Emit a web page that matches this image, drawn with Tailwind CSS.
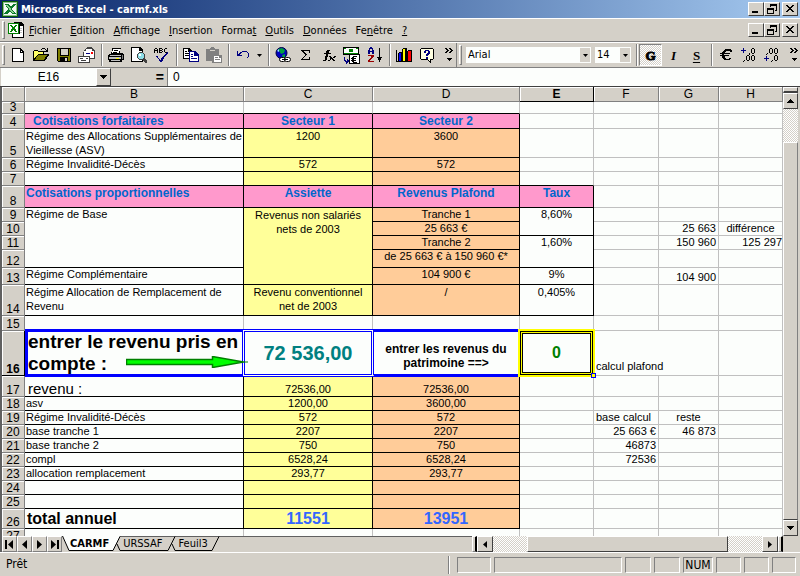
<!DOCTYPE html>
<html lang="fr">
<head>
<meta charset="utf-8">
<title>Microsoft Excel - carmf.xls</title>
<script src="https://cdn.jsdelivr.net/npm/@tailwindcss/browser@4"></script>
</head>
<body class="flex h-screen flex-col overflow-hidden bg-[#d4d0c8] font-['DejaVu_Sans_Condensed','Liberation_Sans',sans-serif] text-[11px] leading-[13px] text-black">

<!-- Shared symbols -->
<svg class="hidden" aria-hidden="true">
  <symbol id="min" viewBox="0 0 12 10"><path d="M2 7h6v2H2z"/></symbol>
  <symbol id="restore" viewBox="0 0 12 10"><path d="M4 0h7v7H9V6h1V2H5v1H4zM1 4h7v6H1zM2 6v3h5V6z" fill-rule="evenodd"/></symbol>
  <symbol id="close" viewBox="0 0 12 10"><path d="M2 1h2v1h1v1h2V2h1V1h2v1H9v1H8v1H7v1h1v1h1v1h1v1H8V7H7V6H5v1H4v1H2V7h1V6h1V5h1V4H4V3H3V2H2z"/></symbol>
  <symbol id="down" viewBox="0 0 7 4"><path d="M0 0h7v1H6v1H5v1H4v1H3V3H2V2H1V1H0z"/></symbol>
  <symbol id="more" viewBox="0 0 9 14"><path d="M0 0h2v1h1v1h1v1H3v1H2v1H0V4h1V3h1V2H1V1H0zM4 0h2v1h1v1h1v1H7v1H6v1H4V4h1V3h1V2H5V1H4zM2 10h5v1H6v1H5v1H4v-1H3v-1H2z"/></symbol>
  <symbol id="xl" viewBox="0 0 16 16">
    <path fill="#086008" d="M0 0h16v16H0z"/><path fill="#8fbf8f" d="M1 1h14v14H1z"/><path fill="#f4faf4" d="M2 2h12v12H2z"/>
    <path fill="#0a7a2a" d="M3 3h4l2 3 2-3h3l-4 5 4 5h-4L8 10l-2 3H2l4-5z"/><path fill="#8fd08f" d="M4 4h2l6 8h-2z"/>
  </symbol>
</svg>

<!-- Title bar -->
<header class="flex h-[18px] shrink-0 items-center bg-linear-to-r from-[#0a246a] to-[#a6caf0] pr-[2px] pl-[2px]">
  <svg class="size-4 shrink-0" shape-rendering="crispEdges" aria-hidden="true"><use href="#xl"/></svg>
  <h1 class="flex-1 pl-[3px] text-[11px] font-bold text-white">Microsoft Excel - carmf.xls</h1>
  <button aria-label="Réduire" class="grid h-[14px] w-4 place-items-center border border-t-white border-r-[#404040] border-b-[#404040] border-l-white bg-[#d4d0c8]"><svg class="h-[10px] w-3" shape-rendering="crispEdges"><use href="#min"/></svg></button>
  <button aria-label="Restaurer" class="grid h-[14px] w-4 place-items-center border border-t-white border-r-[#404040] border-b-[#404040] border-l-white bg-[#d4d0c8]"><svg class="h-[10px] w-3" shape-rendering="crispEdges"><use href="#restore"/></svg></button>
  <button aria-label="Fermer" class="ml-[2px] grid h-[14px] w-4 place-items-center border border-t-white border-r-[#404040] border-b-[#404040] border-l-white bg-[#d4d0c8]"><svg class="h-[10px] w-3" shape-rendering="crispEdges"><use href="#close"/></svg></button>
</header>

<!-- Menu bar -->
<nav class="flex h-6 shrink-0 items-center border-t border-b border-t-white border-b-[#808080] pr-[2px] pl-[2px]">
  <span class="h-[18px] w-[3px] shrink-0 border border-t-white border-r-[#808080] border-b-[#808080] border-l-white"></span>
  <svg class="ml-[3px] h-4 w-[17px] shrink-0" viewBox="0 0 17 16" shape-rendering="crispEdges" aria-hidden="true">
    <path fill="#000" d="M6 0h7l3 3v13H4V12h1z"/><path fill="#fff" d="M7 1h5v3h3v11H5v-3h7V1z"/><path fill="#c0c0c0" d="M12 6h2v1h-2zM12 8h2v1h-2zM12 10h2v1h-2z"/>
    <path fill="#008000" d="M0 1h11v11H0z"/><path fill="#fff" d="M1 2h9v9H1z"/><path fill="#008000" d="M2 3h2l1 2 2-2h2L7 6l2 4H7L5 8l-1 2H2l2-4z"/>
  </svg>
  <div class="flex flex-1 gap-[9px] pl-1">
    <button><u>F</u>ichier</button><button><u>E</u>dition</button><button><u>A</u>ffichage</button><button><u>I</u>nsertion</button><button>Forma<u>t</u></button><button><u>O</u>utils</button><button><u>D</u>onnées</button><button>Fe<u>n</u>être</button><button><u>?</u></button>
  </div>
  <button aria-label="Réduire le classeur" class="grid h-[14px] w-4 place-items-center border border-t-white border-r-[#404040] border-b-[#404040] border-l-white"><svg class="h-[10px] w-3" shape-rendering="crispEdges"><use href="#min"/></svg></button>
  <button aria-label="Restaurer le classeur" class="grid h-[14px] w-4 place-items-center border border-t-white border-r-[#404040] border-b-[#404040] border-l-white"><svg class="h-[10px] w-3" shape-rendering="crispEdges"><use href="#restore"/></svg></button>
  <button aria-label="Fermer le classeur" class="ml-[2px] grid h-[14px] w-4 place-items-center border border-t-white border-r-[#404040] border-b-[#404040] border-l-white"><svg class="h-[10px] w-3" shape-rendering="crispEdges"><use href="#close"/></svg></button>
</nav>

<!-- Toolbars -->
<div class="flex h-[26px] shrink-0 items-center border-t border-b border-t-white border-b-[#808080]">
  <div class="flex w-[457px] shrink-0 items-center self-stretch border-r border-[#808080] *:shrink-0 [&_button]:grid [&_button]:h-[22px] [&_button]:w-[23px] [&_button]:place-items-center">
    <span class="mr-[1px] ml-[2px] h-5 w-[3px] border border-t-white border-r-[#808080] border-b-[#808080] border-l-white"></span>
    <button aria-label="Nouveau"><svg class="size-4" viewBox="0 0 16 16" shape-rendering="crispEdges"><path d="M2 1h9l3 4v10H2z"/><path fill="#fff" d="M3 2h7v4h3v8H3zM11 3l1 2h-1z"/></svg></button>
    <button aria-label="Ouvrir"><svg class="size-4" viewBox="0 0 16 16" shape-rendering="crispEdges"><path d="M0 4h1V3h4v1h6v3h5v1l-4 6H0z"/><path fill="#ff6" d="M1 4h4v1h5v2H5L1 12z"/><path fill="#808000" d="M5 8h9l-3 5H2z"/><path d="M9 1h3v1H9zM8 2h1v1H8zM12 2h1v1h-1zM14 1h1v4h-4V4h2V3h1z"/></svg></button>
    <button aria-label="Enregistrer"><svg class="size-4" viewBox="0 0 16 16" shape-rendering="crispEdges"><path d="M1 1h14v14H2l-1-1z"/><path fill="#808000" d="M2 2h2v7h9V2h1v12H2z"/><path fill="#d4d0c8" d="M5 2h7v6H5zM10 11h2v3h-2z"/><path d="M4 10h8v4H4z"/><path fill="#d4d0c8" d="M9 11h2v3H9z"/></svg></button>
    <button aria-label="Message"><svg class="h-4 w-[17px]" viewBox="0 0 17 16" shape-rendering="crispEdges"><path fill="#404040" d="M5 5h1V3h1V2h1V1h1V0h5v1h1v1h1v1h1v9h-5v-2H5z"/><path fill="#fff" d="M6 4h10v7h-4V9H6zM8 2h6v2H8z"/><path fill="#f00" d="M13 5h2v2h-2z"/><path fill="#000080" d="M8 6h4v1H8z"/><path fill="#404040" d="M0 9h12v7H0z"/><path fill="#fff" d="M1 10h10v5H1z"/><path d="M2 11h3v1H2zM3 13h5v1H3zM8 11h2v1H8z" fill="#404040"/></svg></button>
    <span class="mr-[2px] ml-[3px] h-[22px] w-px bg-[#808080] shadow-[1px_0_0_#fff]"></span>
    <button aria-label="Imprimer"><svg class="size-4" viewBox="0 0 16 16" shape-rendering="crispEdges"><path d="M4 1h9v1h-1v4h3v1h1v6h-2v2H1v-2H0V8h1V7h2V5h1z"/><path fill="#fff" d="M5 2h7l-1 4H4z"/><path d="M6 3h4v1H6zM5 5h4v1H5z"/><path fill="#c0c0c0" d="M2 8h11v1H2zM1 10h12v2H1zM3 13h9v1H3z"/><path fill="#ff0" d="M8 11h3v1H8z"/><path fill="#808080" d="M14 8h1v4h-1z"/></svg></button>
    <button aria-label="Aperçu"><svg class="size-4" viewBox="0 0 16 16" shape-rendering="crispEdges"><path d="M0 0h9l3 3v12H0z"/><path fill="#fff" d="M1 1h7v3h3v10H1z"/><path fill="#404040" d="M8 5h4v1h1v1h1v4h-1v1h-1v1H8v-1H7v-1H6V7h1V6h1z"/><path fill="#8fdfe8" d="M8 6h4v1h1v4h-1v1H8v-1H7V7h1z"/><path fill="#fff" d="M8 7h2v2H8z"/><path fill="#404040" d="M12 11h2v1h1v1h1v3h-2v-1h-1v-1h-1z"/></svg></button>
    <button aria-label="Orthographe"><svg class="size-4" viewBox="0 0 16 16" shape-rendering="crispEdges"><path d="M1 1h2v1H1zM0 2h1v4H0zM3 2h1v4H3zM1 3h2v1H1zM5 1h3v1H5zM5 2h1v4H5zM8 2h1v1H8zM6 3h2v1H6zM8 4h1v1H8zM6 5h2v1H6zM11 1h2v1h-2zM10 2h1v3h-1zM11 5h2v1h-2z"/><path fill="#000080" d="M2 9h2v2h1v1h1v1h1v-2h1v-1h1V9h1V8h1V7h1V6h1V5h1v2h-1v1h-1v1h-1v1h-1v2H9v2H8v1H6v-1H5v-2H4v-1H3v-1H2z"/></svg></button>
    <span class="mr-[2px] ml-[3px] h-[22px] w-px bg-[#808080] shadow-[1px_0_0_#fff]"></span>
    <button aria-label="Copier"><svg class="size-4" viewBox="0 0 16 16" shape-rendering="crispEdges"><path d="M0 1h6l3 3v8H0z"/><path fill="#fff" d="M1 2h4v3h3v6H1z"/><path d="M2 4h2v1H2zM2 6h4v1H2zM2 8h4v1H2z"/><path fill="#000080" d="M6 4h6l4 4v7H6z"/><path fill="#fff" d="M7 5h4v4h4v5H7z"/><path fill="#000080" d="M8 7h2v1H8zM8 9h2v1H8zM8 11h6v1H8zM12 6l2 2h-2z"/></svg></button>
    <button aria-label="Coller"><svg class="size-4" viewBox="0 0 16 16" shape-rendering="crispEdges"><path fill="#808080" d="M0 2h4V1h1V0h3v1h1v1h4v6h3v8H6v-2H0z"/><path fill="#d4d0c8" d="M4 3h5v1H4z"/><path fill="#fff" d="M8 9h5v2h2v4H8z"/><path fill="#808080" d="M9 10h3v1H9zM9 12h5v1H9z"/></svg></button>
    <span class="mr-[2px] ml-[3px] h-[22px] w-px bg-[#808080] shadow-[1px_0_0_#fff]"></span>
    <button aria-label="Annuler"><svg class="size-4" viewBox="0 0 16 16" shape-rendering="crispEdges"><path fill="#000080" d="M2 4h1v3h1V6h1V5h2V4h5v1h1v1h1v4h-1v1h-1v-1h1V6h-1V5H7v1H6v1H5v1h2v1H2z"/></svg></button>
    <span class="grid w-[11px] place-items-center"><svg class="h-[3px] w-[5px]" viewBox="0 0 7 4"><path d="M0 0h7L3.500 4z"/></svg></span>
    <span class="mr-[2px] ml-[3px] h-[22px] w-px bg-[#808080] shadow-[1px_0_0_#fff]"></span>
    <button aria-label="Lien hypertexte"><svg class="size-4" viewBox="0 0 16 16"><circle cx="6.500" cy="6" r="5.500" fill="#0000c0" stroke="#000040"/><path fill="#00a040" d="M3 2l4-1 3 2-1 3-3 1zM7 8l3-1v3l-2 1z"/><path fill="#9df" d="M2 4l2-2v3z"/><rect x="4.500" y="10.500" width="6" height="4" rx="2" fill="#fff" stroke="#000"/><rect x="9.500" y="10.500" width="6" height="4" rx="2" fill="#fff" stroke="#000"/><path d="M7 12h6v1H7z"/></svg></button>
    <button aria-label="Somme"><svg class="size-4" viewBox="0 0 16 16" shape-rendering="crispEdges"><path d="M3 3h9v3h-1V4H6v1h1v1h1v1h1v1H8v1H7v1H6v1H5v1h6v-2h1v3H3v-1h1v-1h1v-1h1V9h1V7H6V6H5V5H4V4H3z"/></svg></button>
    <button aria-label="Fonction"><svg class="size-4" viewBox="0 0 16 16" shape-rendering="crispEdges"><path d="M6 3h3v1h-1v2h2v1H7v3H6v3H5v1H2v-1h2V9h1V7H3V6h2V4h1zM8 9h2v1h1v1h1v-1h1V9h2v1h-1v1h-2v1h1v1h1v1h-2v-1h-1v-1h-1v1H9v1H7v-1h2v-2H9v-1H8z"/></svg></button>
    <button aria-label="Conversion euro"><svg class="h-[17px] w-[17px]" viewBox="0 0 17 17" shape-rendering="crispEdges"><path d="M0 0h16v8H0z"/><path fill="#008000" d="M1 1h14v6H1z"/><path fill="#fff" d="M3 1h10v1h2v4H1V2h2z"/><path fill="#008000" d="M6 2h4v3H6z"/><path d="M6 7h11v10H6z"/><path fill="#fff" d="M7 8h9v8H7z"/><path d="M10 9h4v1h-3v1h2v1h-2v1h2v1h-2v1h3v1h-4v-1H9v-1H8v-1h1v-1H8v-1h1v-1h1z"/><path fill="#000080" d="M1 10h1v3h1v1h1v-2h1v1h1v2H5v1H4v1H3v-2H2v-1H1z"/></svg></button>
    <button aria-label="Tri croissant"><svg class="size-4" viewBox="0 0 16 16" shape-rendering="crispEdges"><path fill="#000080" d="M3 0h2v1h1v2h1v4H5V5H3v2H1V3h1V1h1zM3 2v2h2V2z" fill-rule="evenodd"/><path fill="#900" d="M1 8h6v2H6v1H5v1H4v1H3v1h4v1H1v-2h1v-1h1v-1h1V9H1z"/><path d="M12 1h1v9h2v1h-1v2h-1v2h-1v-2h-1v-2h-1v-1h2z"/></svg></button>
    <span class="mr-[2px] ml-[3px] h-[22px] w-px bg-[#808080] shadow-[1px_0_0_#fff]"></span>
    <button aria-label="Graphique"><svg class="size-4" viewBox="0 0 16 16" shape-rendering="crispEdges"><path d="M0 3h1v11h15v1H0zM2 6l1-1h3v9H2zM6 2l1-1h4v13H6zM11 4l1-1h4v11h-5z"/><path fill="#00f" d="M3 6h2v8H3z"/><path fill="#ff0" d="M7 2h2v12H7z"/><path fill="#f00" d="M12 4h3v10h-3z"/></svg></button>
    <button aria-label="Aide"><svg class="size-4" viewBox="0 0 16 16" shape-rendering="crispEdges"><path d="M2 1h12v1h1v10h-1v1h-2v3l-4-3H2v-1H1V2h1z"/><path fill="#ffffe0" d="M2 2h12v10h-3v2l-3-2H2z"/><path fill="#000080" d="M6 3h4v1h1v3h-1v1H9v1H7V7h1V6h1V4H7v2H5V4h1zM7 10h2v2H7z"/></svg></button>
    <button aria-label="Autres boutons"><svg class="h-[14px] w-[9px]" shape-rendering="crispEdges"><use href="#more"/></svg></button>
  </div>
  <div class="flex flex-1 items-center *:shrink-0 [&_button]:grid [&_button]:h-[22px] [&_button]:w-[23px] [&_button]:place-items-center">
    <span class="mr-1 ml-[2px] h-5 w-[3px] border border-t-white border-r-[#808080] border-b-[#808080] border-l-white"></span>
    <label class="relative h-4 w-[125px]"><span class="sr-only">Police</span>
      <select class="block h-4 w-full appearance-none bg-[#fcfefc] py-0 pl-[2px] leading-4"><option>Arial</option></select>
      <span class="pointer-events-none absolute top-px right-px grid h-[14px] w-[10px] place-items-center bg-[#d4d0c8]"><svg class="h-[3px] w-[5px]" viewBox="0 0 7 4"><path d="M0 0h7L3.500 4z"/></svg></span>
    </label>
    <label class="relative mx-1 h-4 w-9"><span class="sr-only">Taille</span>
      <select class="block h-4 w-full appearance-none bg-[#fcfefc] py-0 pl-[2px] leading-4"><option>14</option></select>
      <span class="pointer-events-none absolute top-px right-px grid h-[14px] w-[10px] place-items-center bg-[#d4d0c8]"><svg class="h-[3px] w-[5px]" viewBox="0 0 7 4"><path d="M0 0h7L3.500 4z"/></svg></span>
    </label>
    <span class="mr-[2px] ml-px h-[22px] w-px bg-[#808080] shadow-[1px_0_0_#fff]"></span>
    <button class="border border-t-[#808080] border-r-white border-b-white border-l-[#808080] bg-[repeating-conic-gradient(#fff_0_25%,#d4d0c8_0_50%)] bg-[length:2px_2px] font-['Liberation_Serif',serif] text-[13px] font-black [-webkit-text-stroke:1px_#000]">G</button>
    <button class="font-['Liberation_Serif',serif] text-[13px] font-bold italic">I</button>
    <button class="font-['Liberation_Serif',serif] text-[13px] font-bold underline underline-offset-2">S</button>
    <span class="mr-[2px] ml-[3px] h-[22px] w-px bg-[#808080] shadow-[1px_0_0_#fff]"></span>
    <button aria-label="Euro"><svg class="size-4" viewBox="0 0 16 16" shape-rendering="crispEdges"><path d="M6 3h1V2h6v1h1v2h-2V4H8v1H7v1h5v1H6v1h5v1H7v2h1v1h3v-1h2v1h-1v1H6v-1H5v-1H4V9H2V8h2V7H2V6h2V5h1V4h1z"/></svg></button>
    <button aria-label="Ajouter une décimale"><svg class="h-[14px] w-[15px]" viewBox="0 0 15 14" shape-rendering="crispEdges"><path fill="#000080" d="M2 0h1v2h2v1H3v2H2V3H0V2h2z"/><path d="M8 5h1v2H8v1H7V7h1zM11 0h2v1h-2zM10 1h1v4h-1zM13 1h1v4h-1zM11 5h2v1h-2zM3 12h1v1H3v1H2v-1h1zM6 7h2v1H6zM5 8h1v4H5zM8 8h1v4H8zM6 12h2v1H6zM11 7h2v1h-2zM10 8h1v4h-1zM13 8h1v4h-1zM11 12h2v1h-2z"/></svg></button>
    <button aria-label="Réduire les décimales"><svg class="h-[14px] w-[15px]" viewBox="0 0 15 14" shape-rendering="crispEdges"><path fill="#000080" d="M2 8h1v2h2v1H3v2H2v-2H0v-1h2z"/><path d="M3 5h1v1H3v1H2V6h1zM6 0h2v1H6zM5 1h1v4H5zM8 1h1v4H8zM6 5h2v1H6zM11 0h2v1h-2zM10 1h1v4h-1zM13 1h1v4h-1zM11 5h2v1h-2zM8 12h1v1H8v1H7v-1h1zM11 7h2v1h-2zM10 8h1v4h-1zM13 8h1v4h-1zM11 12h2v1h-2z"/></svg></button>
    <span class="ml-auto"><svg class="h-[14px] w-[11px]" viewBox="0 0 9 14" shape-rendering="crispEdges"><use href="#more"/></svg></span>
  </div>
</div>

<!-- Formula bar -->
<div class="flex h-[19px] shrink-0 items-stretch border-b border-[#404040] pl-px font-['Liberation_Sans',sans-serif] text-[12px]">
  <input aria-label="Zone Nom" value="E16" class="w-[95px] bg-[#fcfefc] text-center">
  <button aria-label="Liste des noms" class="grid w-[15px] place-items-center border border-t-white border-r-[#404040] border-b-[#404040] border-l-white"><svg class="h-1 w-[7px]" shape-rendering="crispEdges"><use href="#down"/></svg></button>
  <label for="formula" class="flex w-14 items-center justify-end pr-[3px] text-[14px] font-bold">=</label>
  <input id="formula" value="0" class="min-w-0 flex-1 border-l border-[#808080] bg-[#fcfefc] pl-[5px]">
</div>

<!-- Worksheet -->
<main class="flex min-h-0 flex-1 border-l-2 border-[#606060] font-['Liberation_Sans',sans-serif]">
  <div class="min-w-0 flex-1 overflow-hidden bg-[#fcfefc]">
  <table class="w-full table-fixed border-separate border-spacing-0 text-[11px] leading-[13px] [&_td]:border-r [&_td]:border-b [&_td]:border-[#c0c0c0] [&_td]:p-0 [&_td]:px-px [&_th]:border-r [&_th]:border-b [&_th]:border-[#808080] [&_th]:bg-[#d4d0c8] [&_th]:p-0 [&_th]:align-bottom [&_th]:text-[12px] [&_th]:leading-[11px] [&_th]:shadow-[inset_1px_1px_0_#fff] [&_tr]:align-top">
    <colgroup><col class="w-[23px]"><col class="w-[219px]"><col class="w-[129px]"><col class="w-[147px]"><col class="w-[74px]"><col class="w-[65px]"><col class="w-[60px]"><col></colgroup>
    <thead><tr class="h-[15px] font-normal [&_th]:pb-px"><th></th><th class="font-normal">B</th><th class="font-normal">C</th><th class="font-normal">D</th><th class="border-r-black! border-b-black! font-bold">E</th><th class="font-normal">F</th><th class="font-normal">G</th><th class="font-normal">H</th></tr></thead>
    <tbody>
    <tr class="h-3"><th class="font-normal">3</th><td class="border-b-black!"></td><td class="border-b-black!"></td><td class="border-b-black!"></td><td></td><td></td><td></td><td></td></tr>
    <tr class="h-[15px] text-center text-[12px] leading-[14px] font-bold text-[#0066cc]"><th class="font-normal text-black">4</th><td class="border-black! bg-[#ff99cc] pl-2! text-left">Cotisations forfaitaires</td><td class="border-black! bg-[#ff99cc]">Secteur 1</td><td class="border-black! bg-[#ff99cc]">Secteur 2</td><td></td><td></td><td></td><td></td></tr>
    <tr class="h-[29px] text-center leading-[14px]"><th class="font-normal">5</th><td class="border-black! text-justify">Régime des Allocations Supplémentaires de Vieillesse (ASV)</td><td class="border-black! bg-[#ffff99]">1200</td><td class="border-black! bg-[#ffcc99]">3600</td><td></td><td></td><td></td><td></td></tr>
    <tr class="h-[14px] text-center"><th class="font-normal">6</th><td class="border-black! text-left">Régime Invalidité-Décès</td><td class="border-black! bg-[#ffff99]">572</td><td class="border-black! bg-[#ffcc99]">572</td><td></td><td></td><td></td><td></td></tr>
    <tr class="h-[14px]"><th class="font-normal">7</th><td class="border-black!"></td><td class="border-black! bg-[#ffff99]"></td><td class="border-black! bg-[#ffcc99]"></td><td class="border-b-black!"></td><td></td><td></td><td></td></tr>
    <tr class="h-[22px] text-center text-[12px] leading-[14px] font-bold text-[#0066cc]"><th class="font-normal text-black">8</th><td class="border-black! bg-[#ff99cc] text-left">Cotisations proportionnelles</td><td class="border-black! bg-[#ff99cc]">Assiette</td><td class="border-black! bg-[#ff99cc]">Revenus Plafond</td><td class="border-black! bg-[#ff99cc]">Taux</td><td></td><td></td><td></td></tr>
    <tr class="h-[14px] text-center"><th class="font-normal">9</th><td rowspan="4" class="border-black! text-left">Régime de Base</td><td rowspan="5" class="border-black! bg-[#ffff99] leading-[14px]">Revenus non salariés<br>nets de 2003</td><td class="border-black! bg-[#ffcc99]">Tranche 1</td><td rowspan="2" class="border-black!">8,60%</td><td></td><td></td><td></td></tr>
    <tr class="h-[14px] text-center"><th class="font-normal">10</th><td class="border-black! bg-[#ffcc99]">25 663 €</td><td></td><td class="pr-[2px]! text-right">25 663</td><td>différence</td></tr>
    <tr class="h-[14px] text-center"><th class="font-normal">11</th><td class="border-black! bg-[#ffcc99]">Tranche 2</td><td rowspan="2" class="border-black!">1,60%</td><td></td><td class="pr-[2px]! text-right">150 960</td><td class="pr-0! text-right">125 297</td></tr>
    <tr class="h-[18px] text-center"><th class="font-normal">12</th><td class="border-black! bg-[#ffcc99]">de 25 663 € à 150 960 €*</td><td></td><td></td><td></td></tr>
    <tr class="h-[17px] text-center"><th class="font-normal">13</th><td class="border-black! text-left">Régime Complémentaire</td><td class="border-black! bg-[#ffcc99]">104 900 €</td><td class="border-black!">9%</td><td></td><td class="pr-[2px]! text-right align-bottom">104 900</td><td></td></tr>
    <tr class="h-[31px] text-center leading-[14px]"><th class="font-normal">14</th><td class="border-black! text-left">Régime Allocation de Remplacement de Revenu</td><td class="border-black! bg-[#ffff99]">Revenu conventionnel<br>net de 2003</td><td class="border-black! bg-[#ffcc99]">/</td><td class="border-black!">0,405%</td><td></td><td></td><td></td></tr>
    <tr class="h-[15px]"><th class="font-normal">15</th><td></td><td></td><td></td><td></td><td></td><td></td><td></td></tr>
    <tr class="h-[45px] text-center font-bold">
      <th class="border-r-black! border-b-black!">16</th>
      <td class="relative pl-[3px]! text-left align-middle text-[19px] leading-[22px]"><span class="absolute -top-[2px] -right-px -bottom-[2px] left-0 border-3 border-r-0 border-[#0000ff]"></span>entrer le revenu pris en compte :
        <svg class="absolute top-[25px] left-[101px] z-10 h-3 w-[122px]" viewBox="0 0 122 12" aria-hidden="true"><path d="M.500 3.500h86v-3l31 5.500-31 5.500V8.500H.500z" fill="#00ff00" stroke="#008000" stroke-width="1.500"/><path d="M116 6h6" stroke="#008000"/></svg></td>
      <td class="relative align-middle text-[20px] leading-6 text-[#008080]"><span class="absolute -inset-[2px] border-3 border-double border-[#0000ff] bg-[#fcfefc]"></span><span class="relative">72 536,00</span></td>
      <td class="relative pt-[6px]! align-middle text-[12px] leading-[14px]"><span class="absolute inset-x-[1px] -top-[2px] -bottom-[2px] border-y-3 border-[#0000ff]"></span>entrer les revenus du<br>patrimoine ==&gt;</td>
      <td class="relative align-middle text-base leading-5 text-[#008000]"><span class="absolute -inset-[2px] border-2 border-[#ffff00] bg-black p-px"><span class="block h-full border border-[#ffff00] bg-black p-px"><span class="block h-full bg-[#fcfefc]"></span></span></span><span class="absolute -right-[3px] -bottom-[3px] size-[5px] border border-[#0000ff] bg-[#ffff00]"></span><span class="relative">0</span></td>
      <td colspan="2" class="pl-[2px]! text-left align-bottom leading-[17px] font-normal">calcul plafond</td><td></td>
    </tr>
    <tr class="h-[21px] text-center align-bottom!"><th class="font-normal">17</th><td class="border-black! pl-[3px]! text-left text-[15px] leading-[15px]">revenu :</td><td class="border-black! bg-[#ffff99]">72536,00</td><td class="border-black! bg-[#ffcc99]">72536,00</td><td></td><td></td><td></td><td></td></tr>
    <tr class="h-[14px] text-center"><th class="font-normal">18</th><td class="border-black! text-left">asv</td><td class="border-black! bg-[#ffff99]">1200,00</td><td class="border-black! bg-[#ffcc99]">3600,00</td><td></td><td></td><td></td><td></td></tr>
    <tr class="h-[14px] text-center"><th class="font-normal">19</th><td class="border-black! text-left">Régime Invalidité-Décès</td><td class="border-black! bg-[#ffff99]">572</td><td class="border-black! bg-[#ffcc99]">572</td><td></td><td class="pl-[2px]! text-left">base calcul</td><td>reste</td><td></td></tr>
    <tr class="h-[14px] text-center"><th class="font-normal">20</th><td class="border-black! text-left">base tranche 1</td><td class="border-black! bg-[#ffff99]">2207</td><td class="border-black! bg-[#ffcc99]">2207</td><td></td><td class="pr-[2px]! text-right">25 663 €</td><td class="pr-[2px]! text-right">46 873</td><td></td></tr>
    <tr class="h-[14px] text-center"><th class="font-normal">21</th><td class="border-black! text-left">base tranche 2</td><td class="border-black! bg-[#ffff99]">750</td><td class="border-black! bg-[#ffcc99]">750</td><td></td><td class="pr-[2px]! text-right">46873</td><td></td><td></td></tr>
    <tr class="h-[14px] text-center"><th class="font-normal">22</th><td class="border-black! text-left">compl</td><td class="border-black! bg-[#ffff99]">6528,24</td><td class="border-black! bg-[#ffcc99]">6528,24</td><td></td><td class="pr-[2px]! text-right">72536</td><td></td><td></td></tr>
    <tr class="h-[14px] text-center"><th class="font-normal">23</th><td class="border-black! text-left">allocation remplacement</td><td class="border-black! bg-[#ffff99]">293,77</td><td class="border-black! bg-[#ffcc99]">293,77</td><td></td><td></td><td></td><td></td></tr>
    <tr class="h-[14px]"><th class="font-normal">24</th><td class="border-black!"></td><td class="border-black! bg-[#ffff99]"></td><td class="border-black! bg-[#ffcc99]"></td><td></td><td></td><td></td><td></td></tr>
    <tr class="h-[14px]"><th class="font-normal">25</th><td class="border-black!"></td><td class="border-black! bg-[#ffff99]"></td><td class="border-black! bg-[#ffcc99]"></td><td></td><td></td><td></td><td></td></tr>
    <tr class="h-5 text-center text-base leading-[19px] font-bold text-[#3366ff]"><th class="font-normal text-black">26</th><td class="border-black! pl-[2px]! text-left text-black">total annuel</td><td class="border-black! bg-[#ffff99]">11551</td><td class="border-black! bg-[#ffcc99]">13951</td><td></td><td></td><td></td><td></td></tr>
    <tr class="h-[14px]"><th class="font-normal">27</th><td></td><td></td><td></td><td></td><td></td><td></td><td></td></tr>
    </tbody>
  </table>
  </div>
  <!-- Vertical scroll bar -->
  <div class="mr-[2px] flex w-[15px] shrink-0 flex-col bg-[repeating-conic-gradient(#fff_0_25%,#d4d0c8_0_50%)] bg-[length:2px_2px]">
    <span class="h-[6px] border border-t-white border-r-[#404040] border-b-2 border-b-[#404040] border-l-white bg-[#d4d0c8]"></span>
    <button aria-label="Vers le haut" class="grid h-4 place-items-center border border-t-white border-r-[#404040] border-b-[#404040] border-l-white bg-[#d4d0c8]"><svg class="h-1 w-[7px] rotate-180" shape-rendering="crispEdges"><use href="#down"/></svg></button>
    <span class="h-[33px]"></span>
    <span class="flex-1 border border-t-white border-r-[#808080] border-b-[#404040] border-l-white bg-[#d4d0c8]"></span>
    <button aria-label="Vers le bas" class="grid h-4 place-items-center border border-t-white border-r-[#404040] border-b-[#404040] border-l-white bg-[#d4d0c8]"><svg class="h-1 w-[7px]" shape-rendering="crispEdges"><use href="#down"/></svg></button>
  </div>
</main>

<!-- Sheet tabs and horizontal scroll bar -->
<div class="flex h-4 shrink-0 items-stretch border-l-2 border-[#606060] pr-[17px] *:shrink-0">
  <div class="flex *:grid *:w-[15px] *:place-items-center *:border *:border-t-white *:border-r-[#808080] *:border-b-[#808080] *:border-l-white">
    <button aria-label="Première feuille"><svg class="h-[9px] w-[9px]" viewBox="0 0 9 9"><path d="M0 0h2v9H0zM8 0v9L3 4.500z"/></svg></button>
    <button aria-label="Feuille précédente"><svg class="h-[9px] w-[9px]" viewBox="0 0 9 9"><path d="M7 0v9L2 4.500z"/></svg></button>
    <button aria-label="Feuille suivante"><svg class="h-[9px] w-[9px]" viewBox="0 0 9 9"><path d="M2 0v9l5-4.500z"/></svg></button>
    <button aria-label="Dernière feuille"><svg class="h-[9px] w-[9px]" viewBox="0 0 9 9"><path d="M7 0h2v9H7zM1 0v9l5-4.500z"/></svg></button>
  </div>
  <div class="flex w-[410px] items-stretch border-t border-[#606060]">
    <svg class="-mt-px h-[15px] w-2" viewBox="0 0 8 15"><path d="M0 0h8v14H7z" fill="#fcfefc"/><path d="M.500 0 7 14.500h1" fill="none" stroke="#000"/></svg>
    <button class="-mt-px h-[15px] border-b border-black bg-[#fcfefc] font-bold">CARMF</button>
    <svg class="-mt-px h-[15px] w-[14px]" viewBox="0 0 14 15"><path d="M0 0h11L4 14H0z" fill="#fcfefc"/><path d="M0 14.500h4L11 .500M8 8l3 6.500h3" fill="none" stroke="#000"/></svg>
    <button class="h-[14px] border-b border-black">URSSAF</button>
    <svg class="-mt-px h-[15px] w-4" viewBox="0 0 16 15"><path d="M0 14.500h5L12 .500M9 8l3 6.500h4" fill="none" stroke="#000"/></svg>
    <button class="h-[14px] border-b border-black">Feuil3</button>
    <svg class="-mt-px h-[15px] w-3" viewBox="0 0 12 15"><path d="M0 14.500h4L11 .500" fill="none" stroke="#000"/></svg>
  </div>
  <span class="w-[5px] border border-t-white border-r-2 border-r-black border-b-[#808080] border-l-white"></span>
  <button aria-label="Vers la gauche" class="grid w-4 place-items-center border border-t-white border-r-[#404040] border-b-[#404040] border-l-white"><svg class="h-[7px] w-1" viewBox="0 0 4 7"><path d="M4 0v7L0 3.500z"/></svg></button>
  <div class="flex flex-1 bg-[repeating-conic-gradient(#fff_0_25%,#d4d0c8_0_50%)] bg-[length:2px_2px] px-[34px]"><span class="flex-1 border border-t-white border-r-[#404040] border-b-[#404040] border-l-white bg-[#d4d0c8]"></span></div>
  <button aria-label="Vers la droite" class="grid w-4 place-items-center border border-t-white border-r-[#404040] border-b-[#404040] border-l-white"><svg class="h-[7px] w-1" viewBox="0 0 4 7"><path d="M0 0v7l4-3.500z"/></svg></button>
  <span class="w-[5px] border border-t-white border-r-2 border-r-black border-b-[#808080] border-l-white"></span>
</div>

<!-- Status bar -->
<footer class="flex h-6 shrink-0 items-center gap-[3px] border-t border-white pr-1 pl-[6px] text-[12px]">
  <span class="flex-1">Prêt</span>
  <span class="mr-1 h-[18px] w-[2px] border-r border-l border-r-white border-l-[#808080]"></span>
  <span class="h-4 w-[34px] border border-t-[#808080] border-r-white border-b-white border-l-[#808080]"></span>
  <span class="h-4 w-[128px] border border-t-[#808080] border-r-white border-b-white border-l-[#808080]"></span>
  <span class="h-4 w-[26px] border border-t-[#808080] border-r-white border-b-white border-l-[#808080]"></span>
  <span class="h-4 w-[26px] border border-t-[#808080] border-r-white border-b-white border-l-[#808080]"></span>
  <span class="h-4 w-[30px] border border-t-[#808080] border-r-white border-b-white border-l-[#808080] text-center leading-[14px]">NUM</span>
  <span class="h-4 w-[25px] border border-t-[#808080] border-r-white border-b-white border-l-[#808080]"></span>
  <span class="h-4 w-[25px] border border-t-[#808080] border-r-white border-b-white border-l-[#808080]"></span>
  <span class="h-4 w-[24px] border border-t-[#808080] border-r-white border-b-white border-l-[#808080]"></span>
</footer>
</body>
</html>
